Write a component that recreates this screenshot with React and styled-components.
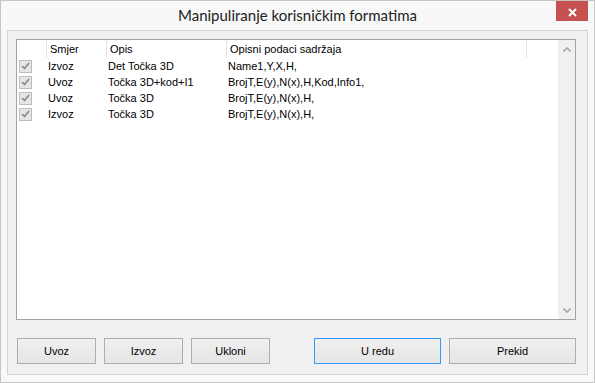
import React from 'react';
import styled, { createGlobalStyle } from 'styled-components';

const Global = createGlobalStyle`
  html, body { margin: 0; padding: 0; background: #ffffff; }
  body { width: 595px; height: 383px; overflow: hidden; }
  * { box-sizing: border-box; }
`;

const Window = styled.div`
  position: relative;
  width: 595px;
  height: 383px;
  border: 1px solid #c6c6c6;
  background: #f8f8f8;
  display: flex;
  flex-direction: column;
  padding: 0 6px 7px 6px;
  font-family: "Liberation Sans", Arial, sans-serif;
  font-size: 11px;
  color: #000;
`;

const TitleBar = styled.div`
  height: 29px;
  display: flex;
  align-items: center;
  justify-content: center;
  font-family: Lato, "Noto Sans", sans-serif;
  font-size: 15px;
  color: #222;
  padding-bottom: 1px;
`;

const CloseButton = styled.div`
  position: absolute;
  top: 0;
  right: 6px;
  width: 32px;
  height: 20px;
  background: #c75050;
  display: flex;
  align-items: center;
  justify-content: center;
  padding-top: 2px;
`;

const Client = styled.div`
  flex: 1;
  border: 1px solid #d4d4d4;
  background: #f0f0f0;
  padding: 8px 11px 10px 8px;
  display: flex;
  flex-direction: column;
`;

const ListView = styled.div`
  height: 281px;
  border: 1px solid #a3a3a3;
  background: #fff;
  display: flex;
`;

const ListContent = styled.div`
  flex: 1;
  display: flex;
  flex-direction: column;
`;

const cols = '30px 60px 120px 300px 1fr';

const HeaderRow = styled.div`
  display: grid;
  grid-template-columns: ${cols};
  height: 18px;
`;

const HeaderCell = styled.div`
  border-right: ${p => (p.$last ? 'none' : '1px solid #e5e5e5')};
  padding: 2px 0 0 3px;
  line-height: 14px;
  white-space: nowrap;
  overflow: hidden;
`;

const Row = styled.div`
  display: grid;
  grid-template-columns: ${cols};
  height: 16px;
  align-items: center;
`;

const Cell = styled.div`
  padding-left: 1px;
  white-space: nowrap;
  line-height: 16px;
`;

const CheckCell = styled.div`
  padding-left: 2px;
  height: 16px;
  display: flex;
  align-items: center;
`;

const CheckBox = styled.div`
  width: 13px;
  height: 13px;
  border: 1px solid #bcbcbc;
  background: #e6e6e6;
  display: flex;
  align-items: center;
  justify-content: center;
`;

const ScrollBar = styled.div`
  width: 17px;
  background: #f0f0f0;
  display: flex;
  flex-direction: column;
  justify-content: space-between;
  align-items: center;
  padding: 7px 0 6px 1px;
`;

const ButtonRow = styled.div`
  margin-top: 18px;
  display: flex;
  justify-content: space-between;
  padding-left: 1px;
`;

const ButtonGroup = styled.div`
  display: flex;
  gap: 8px;
`;

const Button = styled.div`
  width: ${p => (p.$wide ? '127px' : '79px')};
  height: 26px;
  border: 1px solid ${p => (p.$default ? '#3399ff' : '#adadad')};
  background: linear-gradient(#f0f0f0, #e5e5e5);
  display: flex;
  align-items: center;
  justify-content: center;
  font-size: 11px;
  color: #000;
`;

const Check = () => (
  <svg width="9" height="8" viewBox="0 0 9 8">
    <path d="M1 4 L3.5 6.5 L8 1" fill="none" stroke="#8a8a8a" strokeWidth="1.6" />
  </svg>
);

const Chevron = ({ down }) => (
  <svg width="8" height="5" viewBox="0 0 8 5">
    <path
      d={down ? 'M0.5 0.5 L4 4 L7.5 0.5' : 'M0.5 4.5 L4 1 L7.5 4.5'}
      fill="none"
      stroke="#a6a6a6"
      strokeWidth="1.6"
    />
  </svg>
);

const rows = [
  ['Izvoz', 'Det Točka 3D', 'Name1,Y,X,H,'],
  ['Uvoz', 'Točka 3D+kod+I1', 'BrojT,E(y),N(x),H,Kod,Info1,'],
  ['Uvoz', 'Točka 3D', 'BrojT,E(y),N(x),H,'],
  ['Izvoz', 'Točka 3D', 'BrojT,E(y),N(x),H,'],
];

export default function App() {
  return (
    <>
      <Global />
      <Window>
        <TitleBar>Manipuliranje korisničkim formatima</TitleBar>
        <CloseButton>
          <svg width="9" height="9" viewBox="0 0 9 9">
            <path d="M1 1 L8 8 M8 1 L1 8" stroke="#fff" strokeWidth="2" />
          </svg>
        </CloseButton>
        <Client>
          <ListView>
            <ListContent>
              <HeaderRow>
                <HeaderCell />
                <HeaderCell>Smjer</HeaderCell>
                <HeaderCell>Opis</HeaderCell>
                <HeaderCell>Opisni podaci sadržaja</HeaderCell>
                <HeaderCell $last />
              </HeaderRow>
              {rows.map((r, i) => (
                <Row key={i}>
                  <CheckCell>
                    <CheckBox>
                      <Check />
                    </CheckBox>
                  </CheckCell>
                  <Cell>{r[0]}</Cell>
                  <Cell>{r[1]}</Cell>
                  <Cell>{r[2]}</Cell>
                  <Cell />
                </Row>
              ))}
            </ListContent>
            <ScrollBar>
              <Chevron />
              <Chevron down />
            </ScrollBar>
          </ListView>
          <ButtonRow>
            <ButtonGroup>
              <Button>Uvoz</Button>
              <Button>Izvoz</Button>
              <Button>Ukloni</Button>
            </ButtonGroup>
            <ButtonGroup>
              <Button $wide $default>U redu</Button>
              <Button $wide>Prekid</Button>
            </ButtonGroup>
          </ButtonRow>
        </Client>
      </Window>
    </>
  );
}
